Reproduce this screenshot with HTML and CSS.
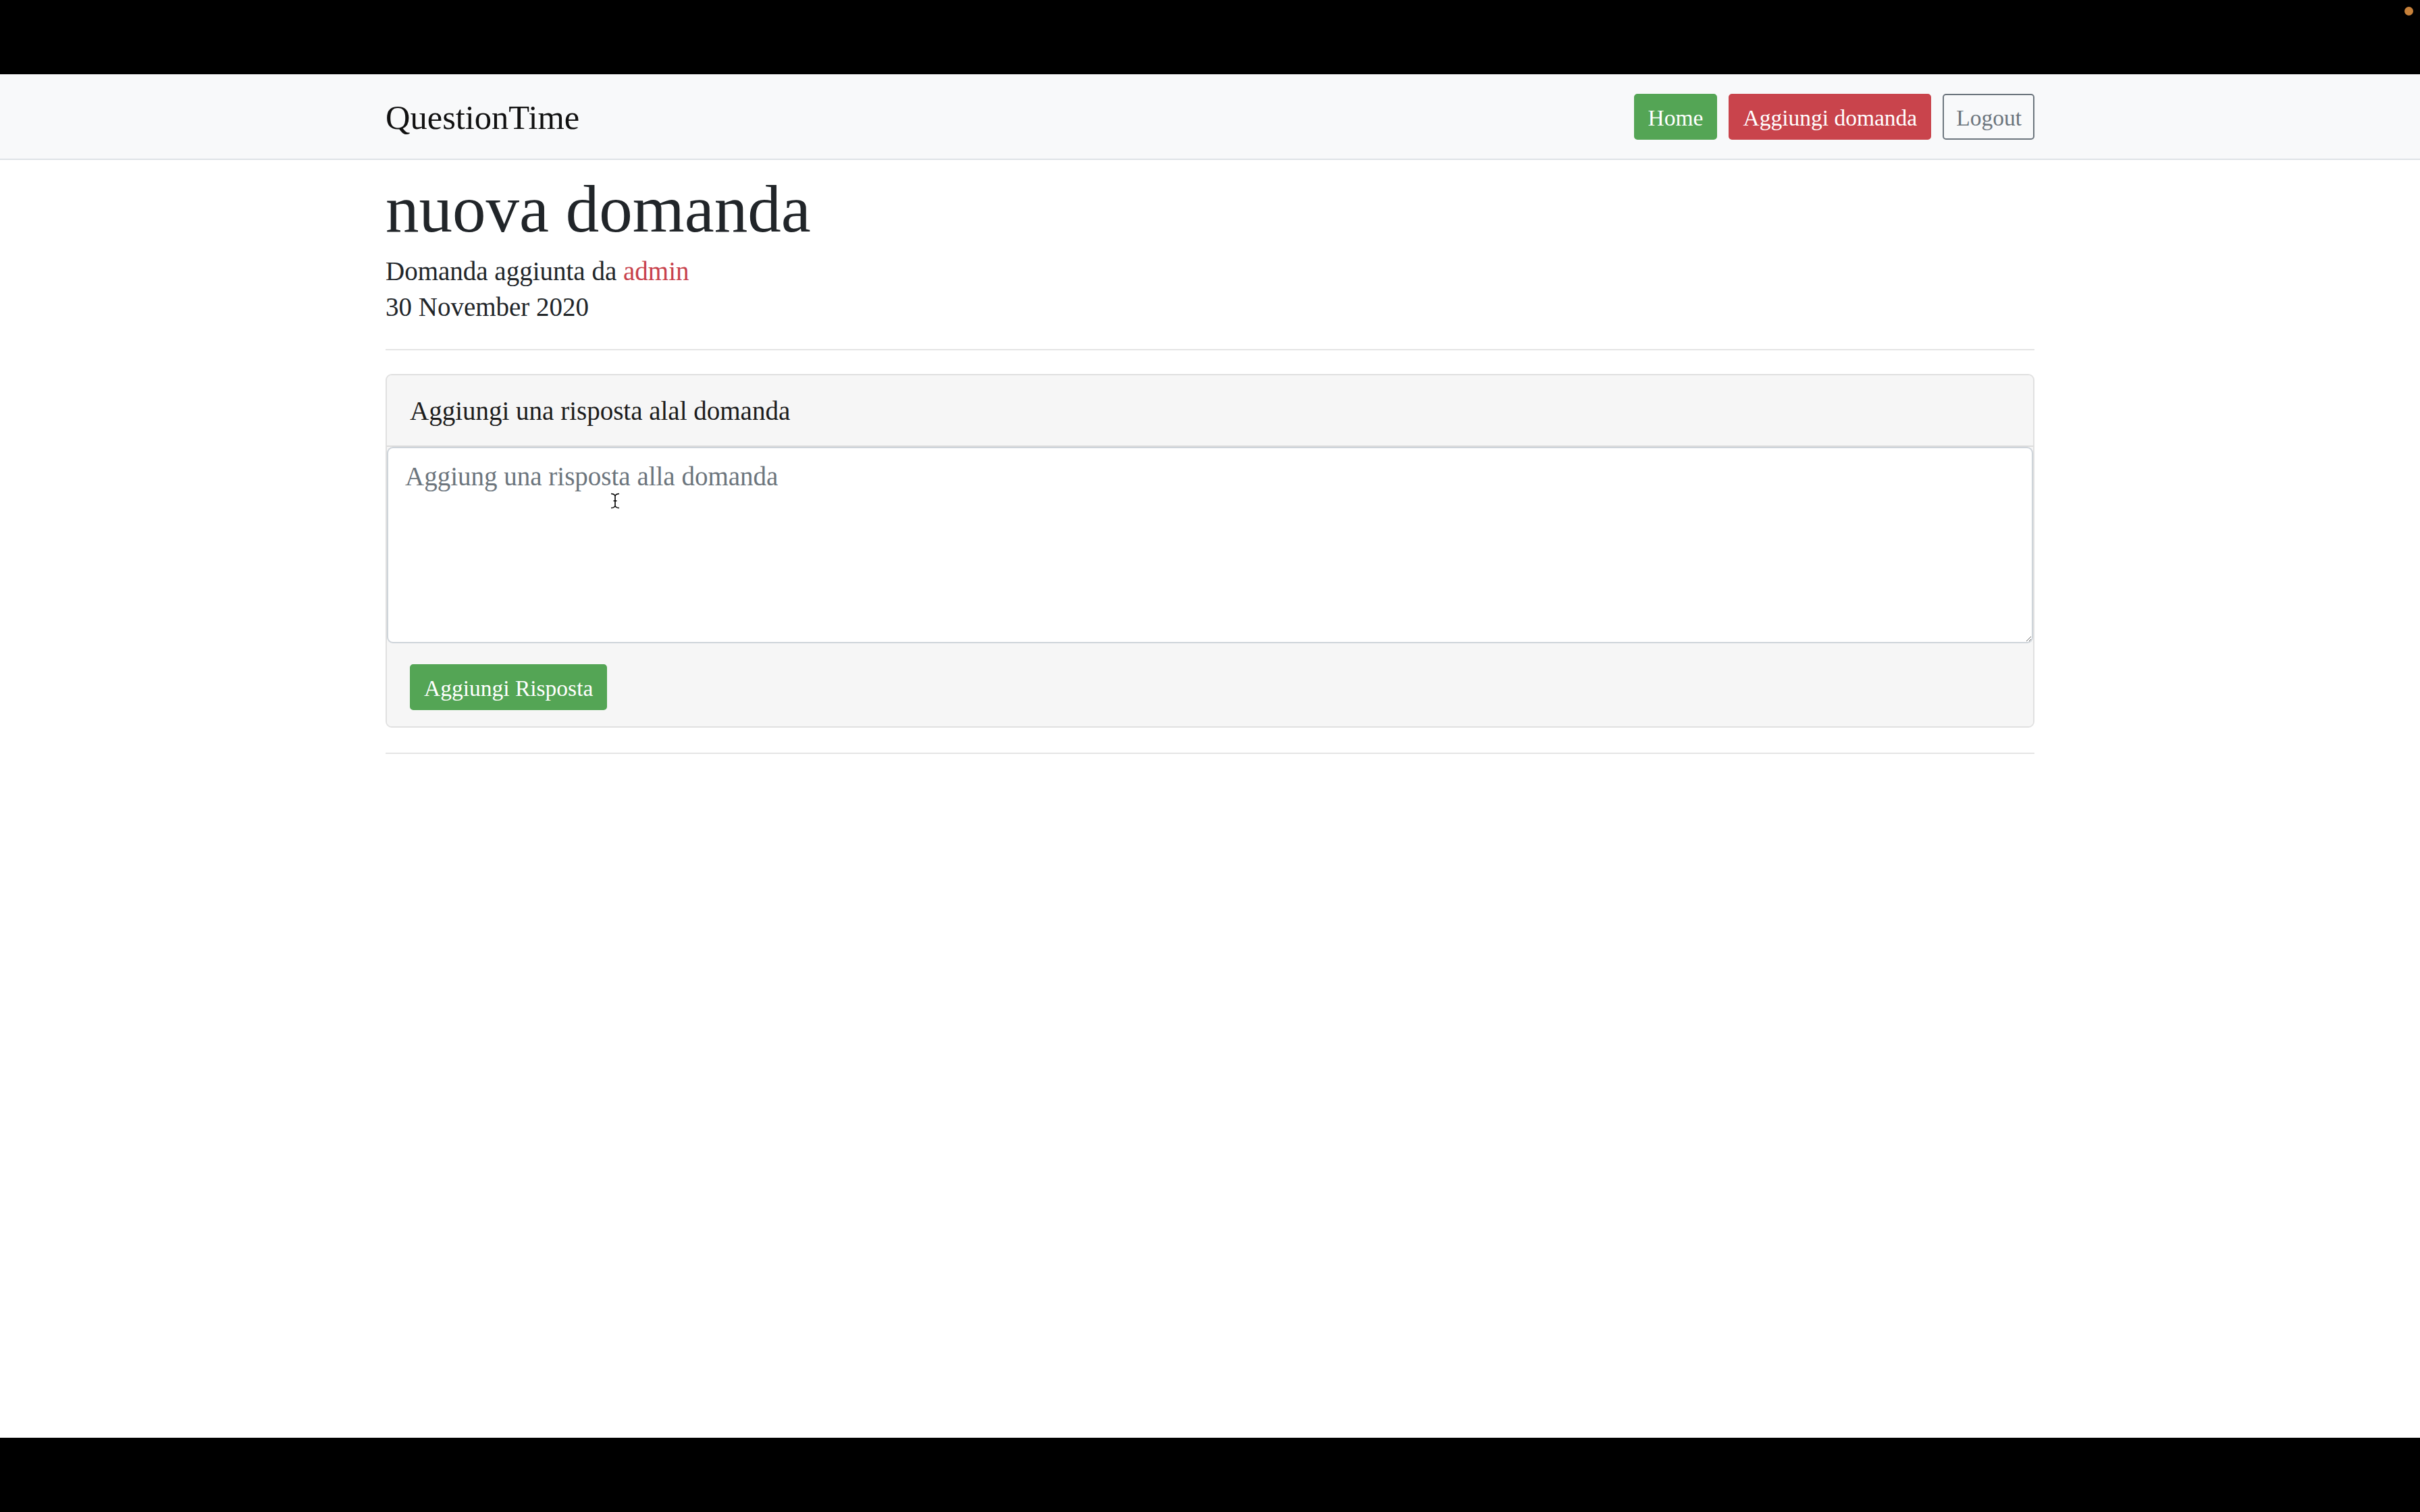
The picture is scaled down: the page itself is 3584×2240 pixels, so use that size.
FILE: index.html
```html
<!DOCTYPE html>
<html lang="it">
<head>
<meta charset="utf-8">
<title>QuestionTime</title>
<link rel="stylesheet" href="styles.css">
</head>
<body>
<div class="screen">
  <div class="blackbar"></div>
  <div class="page">
    <nav class="navbar">
      <div class="container nav-inner">
        <a class="brand" href="#">QuestionTime</a>
        <div class="nav-buttons">
          <a class="btn btn-success" href="#">Home</a>
          <a class="btn btn-danger" href="#">Aggiungi domanda</a>
          <a class="btn btn-outline" href="#">Logout</a>
        </div>
      </div>
    </nav>
    <main class="container">
      <h1 class="title">nuova domanda</h1>
      <p class="meta">Domanda aggiunta da <a class="author" href="#">admin</a><br>30 November 2020</p>
      <hr class="rule">
      <div class="card">
        <div class="card-header">Aggiungi una risposta alal domanda</div>
        <textarea class="answer" placeholder="Aggiung una risposta alla domanda"></textarea>
        <div class="card-footer">
          <button class="btn btn-success" type="button">Aggiungi Risposta</button>
        </div>
      </div>
      <hr class="rule rule-bottom">
    </main>
  </div>
  <div class="blackbar"></div>
</div>
<div class="camera-dot"></div>
<svg class="cursor" width="16" height="24" viewBox="0 0 16 24">
  <path d="M2 1.5c3 0 5 1 6 3 1-2 3-3 6-3M8 4.5v15M2 22.5c3 0 5-1 6-3 1 2 3 3 6 3M5.5 12h5" stroke="#fff" stroke-width="3.4" fill="none" stroke-linecap="round"/>
  <path d="M2 1.5c3 0 5 1 6 3 1-2 3-3 6-3M8 4.5v15M2 22.5c3 0 5-1 6-3 1 2 3 3 6 3M5.5 12h5" stroke="#000" stroke-width="1.6" fill="none"/>
</svg>
</body>
</html>
```

FILE: styles.css
```css
html, body {
  margin: 0;
  padding: 0;
}

body {
  font-family: "Liberation Serif", "Times New Roman", serif;
  color: #212529;
  background: #000;
}

.screen {
  display: flex;
  flex-direction: column;
  height: 2240px;
  overflow: hidden;
}

.blackbar {
  height: 110px;
  flex: 0 0 110px;
  background: #000;
}

.page {
  flex: 1 1 auto;
  background: #fff;
}

.container {
  width: 2442px;
  margin: 0 auto;
}

.navbar {
  background: #f8f9fa;
  border-bottom: 2px solid #dee2e6;
  height: 125px;
}

.nav-inner {
  height: 100%;
  display: flex;
  align-items: center;
  justify-content: space-between;
}

.brand {
  font-size: 50.5px;
  line-height: 60px;
  color: #111;
  text-decoration: none;
  padding-top: 3px;
}

.nav-buttons {
  display: flex;
  gap: 17px;
}

.btn {
  display: inline-flex;
  align-items: center;
  box-sizing: border-box;
  height: 68px;
  padding: 4px 19px 0;
  border: 2px solid transparent;
  border-radius: 5px;
  font-family: "Liberation Serif", "Times New Roman", serif;
  font-size: 33.5px;
  line-height: 64px;
  text-decoration: none;
  cursor: pointer;
}

.btn-success {
  background: #54a555;
  border-color: #54a555;
  color: #fff;
}

.btn-danger {
  background: #c9444c;
  border-color: #c9444c;
  color: #fff;
}

.btn-outline {
  background: transparent;
  border-color: #6c757d;
  color: #6c757d;
  padding-left: 18px;
  padding-right: 17px;
}

.title {
  font-size: 99px;
  font-weight: 400;
  line-height: 106px;
  margin: 20px 0 13px;
}

.meta {
  font-size: 39px;
  line-height: 52.8px;
  margin: 0;
}

.author {
  color: #c8414b;
  text-decoration: none;
}

.rule {
  border: 0;
  border-top: 2px solid #e5e5e5;
  margin: 35px 0;
}

.rule-bottom {
  margin-top: 37px;
}

.card {
  border: 2px solid #e0e0e0;
  border-radius: 9px;
  background: #f5f5f5;
  overflow: hidden;
}

.card-header {
  font-size: 39px;
  line-height: 52.8px;
  padding: 27px 34px 25px;
  border-bottom: 2px solid #dcdcdc;
  color: #1c1c1c;
  background: #f6f6f6;
}

.answer {
  display: block;
  box-sizing: border-box;
  width: 100%;
  height: 291px;
  margin: 0;
  padding: 16px 25px;
  border: 2px solid #ced4da;
  border-radius: 9px;
  background: #fff;
  font-family: "Liberation Serif", "Times New Roman", serif;
  font-size: 39px;
  line-height: 52.8px;
  color: #495057;
}

.answer::placeholder {
  color: #6c757d;
  opacity: 1;
}

.card-footer {
  padding: 31px 34px 24px;
  background: #f6f6f6;
}

.camera-dot {
  position: fixed;
  top: 10px;
  left: 3561px;
  width: 13px;
  height: 13px;
  border-radius: 50%;
  background: #c7813a;
}

.cursor {
  position: fixed;
  left: 903px;
  top: 730px;
}
```
